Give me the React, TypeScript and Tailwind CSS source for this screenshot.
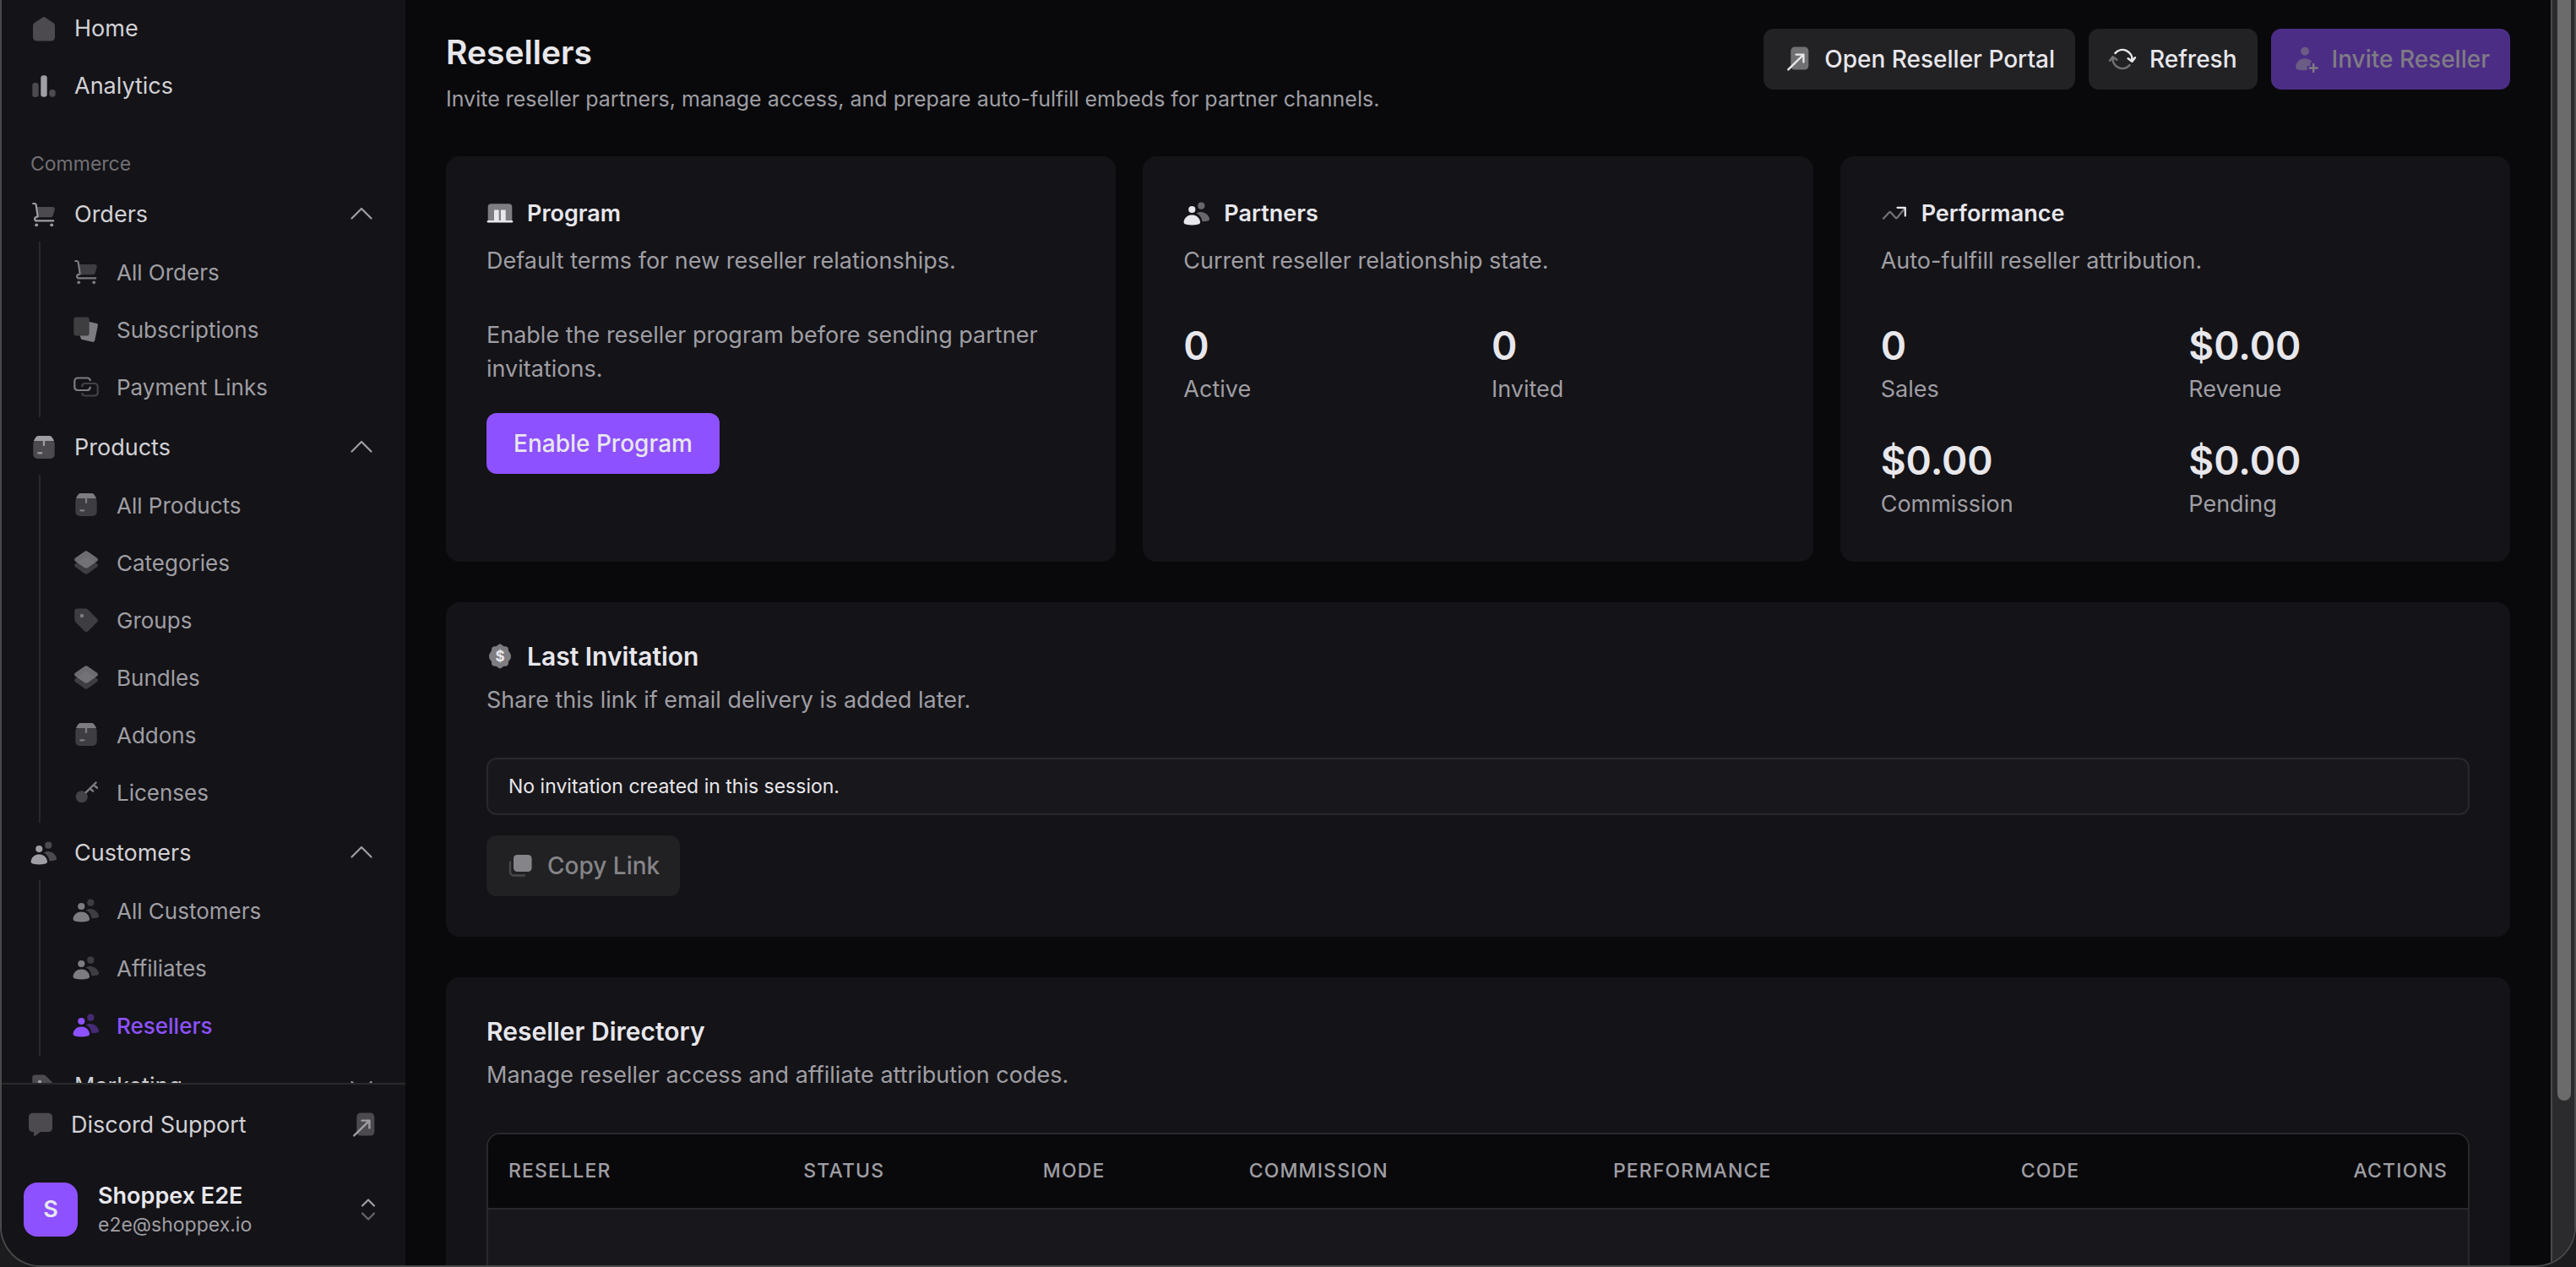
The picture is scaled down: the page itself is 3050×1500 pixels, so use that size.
import type { ReactNode } from "react";

type IconName =
  | "home"
  | "chart"
  | "cart"
  | "cards"
  | "links"
  | "box"
  | "layers"
  | "tag"
  | "key"
  | "users"
  | "chat"
  | "external"
  | "refresh"
  | "userPlus"
  | "store"
  | "trend"
  | "coin"
  | "copy";

interface NavItem {
  label: string;
  icon: IconName;
  active?: boolean;
}

interface NavGroup {
  label: string;
  icon: IconName;
  open: boolean;
  items: NavItem[];
}

const topItems: NavItem[] = [
  { label: "Home", icon: "home" },
  { label: "Analytics", icon: "chart" },
];

const groups: NavGroup[] = [
  {
    label: "Orders",
    icon: "cart",
    open: true,
    items: [
      { label: "All Orders", icon: "cart" },
      { label: "Subscriptions", icon: "cards" },
      { label: "Payment Links", icon: "links" },
    ],
  },
  {
    label: "Products",
    icon: "box",
    open: true,
    items: [
      { label: "All Products", icon: "box" },
      { label: "Categories", icon: "layers" },
      { label: "Groups", icon: "tag" },
      { label: "Bundles", icon: "layers" },
      { label: "Addons", icon: "box" },
      { label: "Licenses", icon: "key" },
    ],
  },
  {
    label: "Customers",
    icon: "users",
    open: true,
    items: [
      { label: "All Customers", icon: "users" },
      { label: "Affiliates", icon: "users" },
      { label: "Resellers", icon: "users", active: true },
    ],
  },
  { label: "Marketing", icon: "tag", open: false, items: [] },
];

const columns = [
  { label: "Reseller", className: "w-[14.9%] text-left" },
  { label: "Status", className: "w-[12.1%] text-left" },
  { label: "Mode", className: "w-[10.4%] text-left" },
  { label: "Commission", className: "w-[18.4%] text-left" },
  { label: "Performance", className: "w-[20.6%] text-left" },
  { label: "Code", className: "w-[11.6%] text-left" },
  { label: "Actions", className: "w-[12%] text-right" },
];

// Duotone icons on a 32 unit grid: the dim layer is drawn at 40%
const icons: Record<IconName, ReactNode> = {
  home: (
    <path
      opacity=".4"
      fill="currentColor"
      d="M14.2 2.7a3 3 0 0 1 3.6 0l9.6 6.6A4 4 0 0 1 29 12.5V26a4.5 4.5 0 0 1-4.5 4.5h-17A4.5 4.5 0 0 1 3 26V12.5a4 4 0 0 1 1.6-3.2z"
    />
  ),
  chart: (
    <g fill="currentColor">
      <rect opacity=".4" x="2.3" y="12" width="7.4" height="17" rx="3.2" />
      <rect x="12.3" y="3.3" width="7.4" height="25.4" rx="3" />
      <rect opacity=".4" x="22.3" y="20" width="7.4" height="8.8" rx="3.5" />
    </g>
  ),
  cart: (
    <>
      <path opacity=".4" fill="currentColor" d="M7.3 7h19.2a2.4 2.4 0 0 1 2.3 3l-2 7a3.2 3.2 0 0 1-3 2.2H9z" />
      <path
        fill="none"
        stroke="currentColor"
        strokeWidth="2.2"
        strokeLinecap="round"
        strokeLinejoin="round"
        d="M3.2 3h1.5a2 2 0 0 1 2 1.7L8.7 18.5l-2 .6a2.2 2.2 0 0 0 .6 4.3H27.2"
      />
      <circle fill="currentColor" cx="7.2" cy="28.3" r="1.9" />
      <circle fill="currentColor" cx="25.2" cy="28.3" r="1.9" />
    </>
  ),
  cards: (
    <>
      <path fill="currentColor" d="M18 6.5l9.8 2.2a2.5 2.5 0 0 1 2 3L26.3 28.8a2.5 2.5 0 0 1-3 2L10.2 27.8 8.5 23z" />
      <rect x="1.3" y="1.6" width="18.4" height="22" rx="3" className="fill-[#3e3e40]" />
    </>
  ),
  links: (
    <g fill="none" stroke="currentColor" strokeWidth="2.2" strokeLinecap="round">
      <path d="M20.8 8.2A3.5 3.5 0 0 0 17.5 5.5H6A3.7 3.7 0 0 0 2.3 9.2v7A3.7 3.7 0 0 0 6 20h11a3.7 3.7 0 0 0 3.7-3.4" />
      <path opacity=".45" d="M11.2 15.2A3.6 3.6 0 0 1 14.8 12H26a3.7 3.7 0 0 1 3.7 3.7v7A3.7 3.7 0 0 1 26 26.5H14.5a3.5 3.5 0 0 1-3.3-2.5" />
    </g>
  ),
  box: (
    <>
      <path opacity=".4" fill="currentColor" d="M3.3 10.5 5 7.5h22l1.7 3V24a5 5 0 0 1-5 5H8.3a5 5 0 0 1-5-5z" />
      <path fill="currentColor" d="M9.5 2h13a4 4 0 0 1 3.5 2.2L28.2 8H3.8L6 4.2A4 4 0 0 1 9.5 2z" />
      <path stroke="currentColor" strokeWidth="2.2" strokeLinecap="round" d="M16 6v7M9.3 22.3h4" />
    </>
  ),
  layers: (
    <g fill="currentColor">
      <path opacity=".4" d="M3.2 17.3 14 10.2a3.6 3.6 0 0 1 4 0l10.8 7.1a2.4 2.4 0 0 1 0 4L18 29a3.6 3.6 0 0 1-4 0L3.2 21.3a2.4 2.4 0 0 1 0-4z" />
      <path opacity=".85" d="M3.2 10.6 14 3a3.6 3.6 0 0 1 4 0l10.8 7.6a2.4 2.4 0 0 1 0 4L18 22a3.6 3.6 0 0 1-4 0L3.2 14.6a2.4 2.4 0 0 1 0-4z" />
    </g>
  ),
  tag: (
    <g fill="currentColor">
      <path opacity=".4" d="M5.5 2.6h9.8a4.5 4.5 0 0 1 3.2 1.3l10 10a3.7 3.7 0 0 1 0 5.2l-9.7 9.7a3.7 3.7 0 0 1-5.2 0l-10-10A4.5 4.5 0 0 1 2.3 15.6V5.8a3.2 3.2 0 0 1 3.2-3.2z" />
      <circle cx="11" cy="11" r="2.2" />
    </g>
  ),
  key: (
    <>
      <circle opacity=".45" fill="currentColor" cx="10.7" cy="21.3" r="7" />
      <path
        fill="none"
        stroke="currentColor"
        strokeWidth="2.4"
        strokeLinecap="round"
        strokeLinejoin="round"
        d="M15.8 16.2 27.6 4.5M20.5 11.5l3.7 3.2M24.8 7.3l4.2 3.4"
      />
    </>
  ),
  users: (
    <g fill="currentColor">
      <circle opacity=".4" cx="21.3" cy="6.7" r="4.1" />
      <path opacity=".4" d="M15.6 15.6c2-1.5 4.6-2 7.2-1.3 4.4 1 7.3 4 8.2 7.6.3 1.5-.6 2.4-2 2.7-2 .5-4.3.8-6.5.7-.6-4.4-3-8-6.9-9.7z" />
      <circle cx="10.3" cy="11" r="4.1" />
      <path d="M10.3 17.6c5.2 0 9 3.5 9.7 8 .2 1.5-.5 2.5-2 3-2.4.7-5 1-7.7 1s-5.3-.3-7.7-1c-1.5-.5-2.2-1.5-2-3 .7-4.5 4.5-8 9.7-8z" />
    </g>
  ),
  chat: (
    <path opacity=".4" fill="currentColor" d="M6.5 1.7h19A4.5 4.5 0 0 1 30 6.2v13.3A4.5 4.5 0 0 1 25.5 24H16l-6.3 4.8c-.9.6-1.7.2-1.7-.8v-4H6.5A4.5 4.5 0 0 1 2 19.5V6.2a4.5 4.5 0 0 1 4.5-4.5z" />
  ),
  external: (
    <>
      <rect opacity=".4" fill="currentColor" x="8.3" y="1.6" width="21" height="27" rx="4.5" />
      <path
        fill="none"
        stroke="currentColor"
        strokeWidth="2.4"
        strokeLinecap="round"
        strokeLinejoin="round"
        d="M5.3 28.4 23.4 10.6M14.6 10.6h8.8v8.8"
      />
    </>
  ),
  refresh: (
    <g fill="none" stroke="currentColor" strokeWidth="2.6" strokeLinecap="round" strokeLinejoin="round">
      <path d="M7.5 8.8A11.5 11.5 0 0 1 27.4 18.2M22.7 15.3l4.7 3.4 3.5-4.4" />
      <path opacity=".4" d="M24.5 23.2A11.5 11.5 0 0 1 4.6 13.8M9.3 16.7l-4.7-3.4-3.5 4.4" />
    </g>
  ),
  userPlus: (
    <>
      <circle opacity=".6" fill="currentColor" cx="16" cy="6.8" r="5" />
      <path opacity=".6" fill="currentColor" d="M16 15.2c3.9 0 6.8 1.6 8.5 4.5h-2v4.3h-3.8V29c-4 .6-8.2.3-11.2-.7-1.9-.6-2.7-2-2.3-3.8 1.1-5.5 5-9.3 10.8-9.3z" />
      <path stroke="currentColor" strokeWidth="2.4" strokeLinecap="round" d="M26.2 22v9M21.7 26.5h9" />
    </>
  ),
  store: (
    <>
      <path opacity=".5" fill="currentColor" d="M5.5 4.3h21a3.8 3.8 0 0 1 3.8 3.8v16H1.7v-16a3.8 3.8 0 0 1 3.8-3.8z" />
      <path fill="currentColor" d="M9 11.5h5.7V24H9zM17 11.5h5.7V24H17z" />
      <path stroke="currentColor" strokeWidth="2.6" strokeLinecap="round" d="M2 25.2h28" />
    </>
  ),
  trend: (
    <g fill="none" stroke="currentColor" strokeWidth="2.2" strokeLinecap="round" strokeLinejoin="round">
      <path opacity=".45" d="M3 21.8 10 14.2a1 1 0 0 1 1.5 0l6 6.8a1 1 0 0 0 1.5 0L28.5 9.5" />
      <path d="M19.5 8.8h9.3v9.8" />
    </g>
  ),
  coin: (
    <>
      <path
        opacity=".5"
        fill="currentColor"
        d="M16 1.6c1.9 0 2.8 1.8 4.2 2.4s3.3-.1 4.7 1.2.8 3.2 1.3 4.6 2.7 2.7 2.7 4.9v2.6c0 2.2-2.2 3.5-2.7 4.9s.1 3.3-1.3 4.6-3.3.7-4.7 1.2-2.3 2.4-4.2 2.4-2.8-1.9-4.2-2.4-3.3.1-4.7-1.2-.8-3.2-1.3-4.6-2.7-2.7-2.7-4.9v-2.6c0-2.2 2.2-3.5 2.7-4.9S5.7 6.5 7.1 5.2s3.3-.6 4.7-1.2S14.1 1.6 16 1.6z"
      />
      <text x="16" y="22" textAnchor="middle" fill="currentColor" fontSize="17" fontWeight="700">
        $
      </text>
    </>
  ),
  copy: (
    <>
      <rect fill="currentColor" x="8" y="3" width="21.6" height="20" rx="4.5" />
      <path opacity=".4" fill="none" stroke="currentColor" strokeWidth="2.4" strokeLinecap="round" d="M4 11.5V23a4.5 4.5 0 0 0 4.5 4.5H21" />
    </>
  ),
};

function Icon({ name, className = "" }: { name: IconName; className?: string }) {
  return (
    <svg viewBox="0 0 32 32" className={"size-8 shrink-0 overflow-visible " + className} aria-hidden="true">
      {icons[name]}
    </svg>
  );
}

function Chevron({ open }: { open: boolean }) {
  return (
    <svg
      viewBox="0 0 32 32"
      className="size-8 shrink-0 text-[#9f9ea4]"
      fill="none"
      stroke="currentColor"
      strokeWidth="2.2"
      strokeLinecap="round"
      strokeLinejoin="round"
      aria-hidden="true"
    >
      <path d={open ? "M4.5 20.5 16 9l11.5 11.5" : "M4.5 11 16 22.5 27.5 11"} />
    </svg>
  );
}

function SidebarGroup({ group }: { group: NavGroup }) {
  return (
    <li>
      <button
        type="button"
        aria-expanded={group.open}
        className="flex h-16 w-full items-center gap-5 pr-9 pl-[34px] text-left text-[27px] text-[#d2d1d6]"
      >
        <Icon name={group.icon} className="text-[#9f9ea4]" />
        <span className="flex-1">{group.label}</span>
        <Chevron open={group.open} />
      </button>
      {group.open && (
        <ul className="ml-11 flex flex-col gap-1 border-l-2 border-[#29292b] py-1">
          {group.items.map((item) => (
            <li key={item.label}>
              <a
                href="#"
                className={
                  "flex h-16 items-center gap-5 pl-[38px] text-[26px] " +
                  (item.active ? "font-medium text-[#8e51ff]" : "text-[#9f9ea4]")
                }
              >
                <Icon name={item.icon} className={item.active ? "" : "text-[#7d7c81]"} />
                {item.label}
              </a>
            </li>
          ))}
        </ul>
      )}
    </li>
  );
}

function Sidebar() {
  return (
    <aside className="flex w-[478px] shrink-0 flex-col bg-[#141317]">
      <nav className="min-h-0 flex-1 overflow-hidden pt-0.5">
        <ul className="flex flex-col gap-1">
          {topItems.map((item) => (
            <li key={item.label}>
              <a href="#" className="flex h-16 items-center gap-5 pl-[34px] text-[27px] text-[#d2d1d6]">
                <Icon name={item.icon} className="text-[#9f9ea4]" />
                {item.label}
              </a>
            </li>
          ))}
        </ul>
        <h2 className="mt-10 mb-2 flex h-10 items-center pl-[34px] text-[23px] text-[#717075]">Commerce</h2>
        <ul className="flex flex-col gap-1">
          {groups.map((group) => (
            <SidebarGroup key={group.label} group={group} />
          ))}
        </ul>
      </nav>

      <div className="border-t-2 border-[#29292b] pt-4 pb-8">
        <a href="#" className="flex h-16 items-center gap-5 pr-[34px] pl-[30px] text-[27px] text-[#d2d1d6]">
          <Icon name="chat" className="text-[#9f9ea4]" />
          <span className="flex-1">Discord Support</span>
          <Icon name="external" className="text-[#9f9ea4]" />
        </a>
        <button type="button" className="mt-[34px] flex w-full items-center gap-6 pr-7 pl-[26px] text-left">
          <span className="flex size-16 items-center justify-center rounded-2xl bg-[#8e51ff] text-[27px] font-semibold text-[#e8e7ec]">
            S
          </span>
          <span className="flex flex-1 flex-col">
            <span className="text-[27px] leading-9 font-semibold text-[#e8e7ec]">Shoppex E2E</span>
            <span className="text-[23px] leading-8 text-[#9f9ea4]">e2e@shoppex.io</span>
          </span>
          <svg
            viewBox="0 0 32 32"
            className="size-8 text-[#9f9ea4]"
            fill="none"
            stroke="currentColor"
            strokeWidth="2.2"
            strokeLinecap="round"
            strokeLinejoin="round"
            aria-hidden="true"
          >
            <path d="M9 11.5 16 4.500l7 7" />
            <path opacity=".6" d="M9 20.500l7 7 7-7" />
          </svg>
        </button>
      </div>
    </aside>
  );
}

function Stat({ value, label }: { value: string; label: string }) {
  return (
    <div className="flex flex-col">
      <dd className="text-[46px] leading-16 font-semibold text-[#e8e7ec]">{value}</dd>
      <dt className="text-[27px] leading-10 text-[#9f9ea4]">{label}</dt>
    </div>
  );
}

function SummaryCard({
  icon,
  title,
  description,
  children,
}: {
  icon: IconName;
  title: string;
  description: string;
  children: ReactNode;
}) {
  return (
    <section className="rounded-2xl bg-[#141317] p-12">
      <h2 className="flex items-center gap-4 text-[27px] leading-10 font-semibold text-[#e8e7ec]">
        <Icon name={icon} />
        {title}
      </h2>
      <p className="mt-4 mb-12 text-[27px] leading-10 text-[#9f9ea4]">{description}</p>
      {children}
    </section>
  );
}

export default function App() {
  return (
    <div className="h-screen overflow-hidden bg-[#1c1c1e] font-['Inter',sans-serif]">
      <div className="flex h-full overflow-hidden rounded-b-[48px] border-x-2 border-b-2 border-[#4a4a4c] bg-[#09090b]">
        <Sidebar />

        <main className="min-w-0 flex-1 overflow-hidden px-12 pt-[34px]">
          <header className="flex items-start justify-between">
            <div>
              <h1 className="text-[39px] leading-14 font-semibold text-[#e8e7ec]">Resellers</h1>
              <p className="mt-[7px] text-[25px] leading-10 text-[#9f9ea4]">
                Invite reseller partners, manage access, and prepare auto-fulfill embeds for partner channels.
              </p>
            </div>
            <div className="flex gap-4 text-[28px] font-medium text-[#e8e7ec]">
              <button type="button" className="flex h-18 items-center gap-4 rounded-xl bg-[#222224] px-6">
                <Icon name="external" />
                Open Reseller Portal
              </button>
              <button type="button" className="flex h-18 items-center gap-4 rounded-xl bg-[#222224] px-6">
                <Icon name="refresh" />
                Refresh
              </button>
              <button
                type="button"
                disabled
                className="flex h-18 items-center gap-4 rounded-xl bg-[#4c2d86] px-6 text-[#7f7c84]"
              >
                <Icon name="userPlus" />
                Invite Reseller
              </button>
            </div>
          </header>

          <div className="mt-12 grid grid-cols-3 gap-8">
            <SummaryCard icon="store" title="Program" description="Default terms for new reseller relationships.">
              <p className="text-[27px] leading-10 text-[#9f9ea4]">
                Enable the reseller program before sending partner invitations.
              </p>
              <button
                type="button"
                className="mt-8 h-18 rounded-xl bg-[#8e51ff] px-8 text-[28px] font-medium text-[#e8e7ec]"
              >
                Enable Program
              </button>
            </SummaryCard>
            <SummaryCard icon="users" title="Partners" description="Current reseller relationship state.">
              <dl className="grid grid-cols-2 gap-8">
                <Stat value="0" label="Active" />
                <Stat value="0" label="Invited" />
              </dl>
            </SummaryCard>
            <SummaryCard icon="trend" title="Performance" description="Auto-fulfill reseller attribution.">
              <dl className="grid grid-cols-2 gap-8">
                <Stat value="0" label="Sales" />
                <Stat value="$0.00" label="Revenue" />
                <Stat value="$0.00" label="Commission" />
                <Stat value="$0.00" label="Pending" />
              </dl>
            </SummaryCard>
          </div>

          <section className="mt-12 rounded-2xl bg-[#141317] p-12">
            <h2 className="flex items-center gap-4 text-[30px] leading-8 font-semibold text-[#e8e7ec]">
              <Icon name="coin" />
              Last Invitation
            </h2>
            <p className="mt-4 text-[27px] leading-10 text-[#9f9ea4]">Share this link if email delivery is added later.</p>
            <input
              readOnly
              aria-label="Invitation link"
              value="No invitation created in this session."
              className="mt-12 block h-[68px] w-full rounded-xl border-2 border-[#29292b] bg-[#18171b] px-6 text-[23px] text-[#e8e7ec]"
            />
            <button
              type="button"
              disabled
              className="mt-6 flex h-18 items-center gap-4 rounded-xl bg-[#212123] px-6 text-[28px] font-medium text-[#858488]"
            >
              <Icon name="copy" />
              Copy Link
            </button>
          </section>

          <section className="mt-12 rounded-2xl bg-[#141317] p-12">
            <h2 className="text-[30px] leading-8 font-semibold text-[#e8e7ec]">Reseller Directory</h2>
            <p className="mt-4 text-[27px] leading-10 text-[#9f9ea4]">
              Manage reseller access and affiliate attribution codes.
            </p>
            <div className="mt-12 overflow-hidden rounded-2xl border-2 border-[#29292b] bg-[#18171b]">
              <table className="w-full table-fixed">
                <thead className="bg-[#09090b]">
                  <tr className="h-[88px] border-b-2 border-[#29292b]">
                    {columns.map((column) => (
                      <th
                        key={column.label}
                        scope="col"
                        className={"px-6 text-[23px] font-medium tracking-wider text-[#9f9ea4] uppercase " + column.className}
                      >
                        {column.label}
                      </th>
                    ))}
                  </tr>
                </thead>
                <tbody>
                  <tr className="h-40">
                    <td colSpan={7} />
                  </tr>
                </tbody>
              </table>
            </div>
          </section>
        </main>

        {/* Scroll track */}
        <div className="w-7 shrink-0 border-l-2 border-[#48484a] bg-[#2b2b2d] pl-1.5">
          <div className="h-[87%] w-4 rounded-b-full bg-[#6b6b6b]" />
        </div>
      </div>
    </div>
  );
}
